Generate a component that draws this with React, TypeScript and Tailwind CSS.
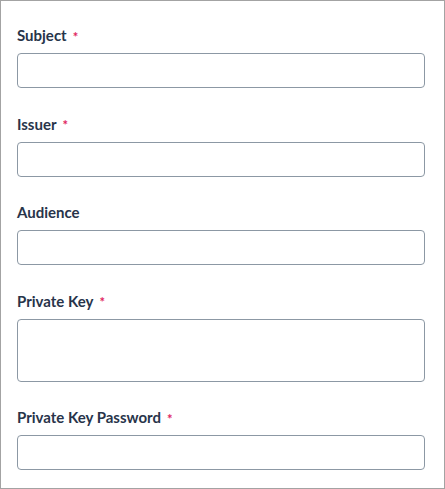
const fields = [
  { label: "Subject", required: true, multiline: false },
  { label: "Issuer", required: true, multiline: false },
  { label: "Audience", required: false, multiline: false },
  { label: "Private Key", required: true, multiline: true },
  { label: "Private Key Password", required: true, multiline: false },
]

export default function App() {
  return (
    <div
      className="w-[445px] h-[489px] border border-[#a3a3a3] bg-white pl-4 pr-[19px] pt-6 overflow-hidden"
      style={{ fontFamily: "Lato, 'Open Sans', sans-serif" }}
    >
      <div className="flex flex-col gap-[25.5px]">
        {fields.map((f) => (
          <div key={f.label} className="flex flex-col">
            <label className="h-5 mb-2 flex items-center text-[15px] leading-5 font-bold text-[#28344a]">
              {f.label}
              {f.required && (
                <span className="ml-[6px] relative top-[2px] text-[13px] font-bold text-[#e0245e] leading-none">*</span>
              )}
            </label>
            {f.multiline ? (
              <textarea className="w-full h-[63px] border border-[#8c98a4] rounded-[4px] resize-none outline-none" />
            ) : (
              <input
                type="text"
                className="w-full h-[35px] border border-[#8c98a4] rounded-[4px] outline-none"
              />
            )}
          </div>
        ))}
      </div>
    </div>
  )
}
